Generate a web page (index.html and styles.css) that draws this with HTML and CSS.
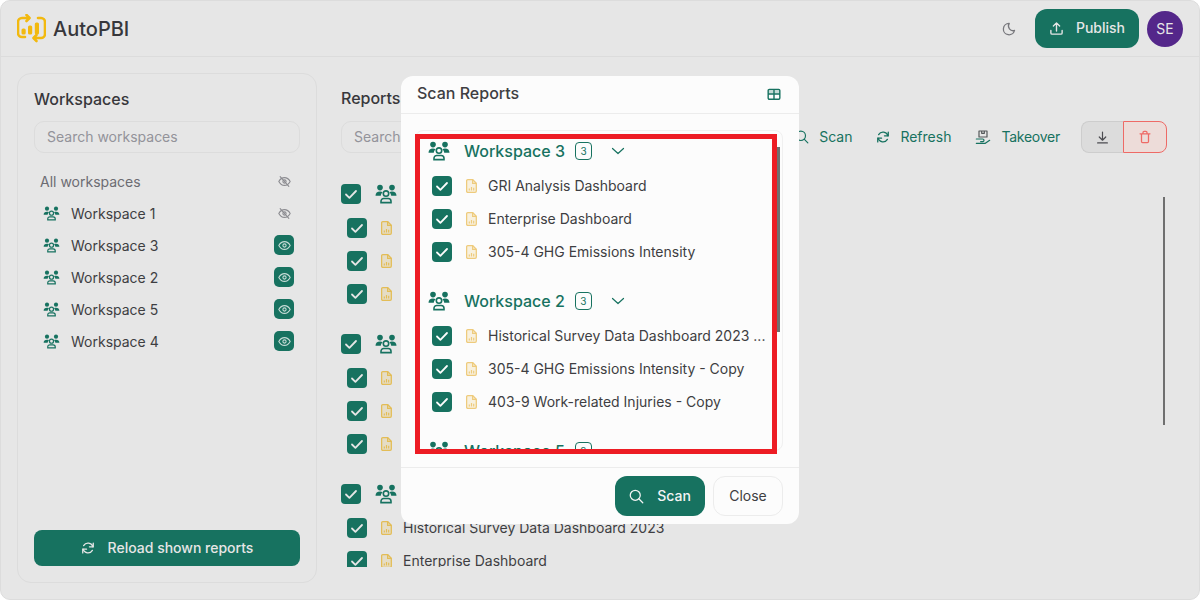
FILE: index.html
```html
<!DOCTYPE html>
<html lang="en">
<head>
    <meta charset="UTF-8">
    <meta name="viewport" content="width=device-width, initial-scale=1.0">
    <title>AutoPBI</title>
    <link rel="stylesheet" href="styles.css">
</head>
<body>
    <svg class="sprite" width="0" height="0" aria-hidden="true">
        <symbol id="i-group" viewBox="0 0 22 20">
            <circle cx="5" cy="3.600" r="2.800" fill="currentColor"/>
            <circle cx="17" cy="3.600" r="2.800" fill="currentColor"/>
            <path d="M0.500 11.800c0-2.800 1.700-4.300 4.500-4.300c1 0 1.900 .2 2.600 .7c-1 .8-1.600 2-1.800 3.600z" fill="currentColor"/>
            <path d="M21.500 11.800c0-2.800-1.700-4.300-4.500-4.300c-1 0-1.900 .2-2.600 .7c1 .8 1.600 2 1.800 3.600z" fill="currentColor"/>
            <circle cx="11" cy="9.600" r="2.700" fill="none" stroke="currentColor" stroke-width="1.600"/>
            <path d="M6 18.600v-1.300c0-1.800 1.200-2.800 2.800-2.800h4.400c1.600 0 2.800 1 2.800 2.800v1.300z" fill="none" stroke="currentColor" stroke-width="1.600"/>
        </symbol>
        <symbol id="i-file" viewBox="0 0 11 14">
            <path d="M1.800 .7h5l3.500 3.500v7.900a1.200 1.200 0 0 1-1.200 1.200h-7.300a1.200 1.200 0 0 1-1.200-1.200v-10.200a1.200 1.200 0 0 1 1.200-1.200z" fill="currentColor" fill-opacity=".22" stroke="currentColor" stroke-width="1.300"/>
            <path d="M6.600 .8v3.600h3.600" fill="none" stroke="currentColor" stroke-width="1.200"/>
            <path d="M3.300 11.500v-2M5.500 11.500v-3.500M7.700 11.500v-2.700" fill="none" stroke="currentColor" stroke-width="1.200"/>
        </symbol>
        <symbol id="i-check" viewBox="0 0 20 20">
            <path d="M5 10.500l3.400 3.300l6.600-6.800" fill="none" stroke="currentColor" stroke-width="1.800" stroke-linecap="round" stroke-linejoin="round"/>
        </symbol>
        <symbol id="i-eye" viewBox="0 0 24 24">
            <g fill="none" stroke="currentColor" stroke-width="2" stroke-linecap="round" stroke-linejoin="round">
                <circle cx="12" cy="12" r="3"/>
                <path d="M1.500 12c2.600-4.800 6-7.200 10.500-7.200s7.900 2.400 10.500 7.200c-2.600 4.800-6 7.200-10.500 7.200s-7.900-2.400-10.500-7.200"/>
            </g>
        </symbol>
        <symbol id="i-eye-off" viewBox="0 0 24 24">
            <g fill="none" stroke="currentColor" stroke-width="2" stroke-linecap="round" stroke-linejoin="round">
                <circle cx="12" cy="12" r="3"/>
                <path d="M1.500 12c2.600-4.800 6-7.200 10.500-7.200s7.900 2.400 10.500 7.200c-2.600 4.800-6 7.200-10.500 7.200s-7.900-2.400-10.500-7.200"/>
                <path d="M4 3l16 18"/>
            </g>
        </symbol>
        <symbol id="i-search" viewBox="0 0 24 24">
            <g fill="none" stroke="currentColor" stroke-width="2" stroke-linecap="round">
                <circle cx="10" cy="10" r="8"/>
                <path d="M22 22l-6.300-6.300"/>
            </g>
        </symbol>
        <symbol id="i-refresh" viewBox="0 0 24 24">
            <g fill="none" stroke="currentColor" stroke-width="2.200" stroke-linecap="round" stroke-linejoin="round">
                <path d="M20.500 10a8.800 8.800 0 0 0-16-2"/>
                <path d="M3.500 14a8.800 8.800 0 0 0 16 2"/>
                <path d="M21 3.500v6.500h-6.500"/>
                <path d="M3 20.500v-6.500h6.500"/>
            </g>
        </symbol>
    </svg>

    <div class="app">
        <header class="topbar">
            <div class="brand">
                <svg class="logo" viewBox="17 15 29 29">
                    <g fill="none" stroke="#f2b90f" stroke-width="2.600" stroke-linecap="round" stroke-linejoin="round">
                        <path d="M29 19h-7a4 4 0 0 0-4 4v11a4 4 0 0 0 4 4h3"/>
                        <path d="M34 39h7a4 4 0 0 0 4-4v-12a4 4 0 0 0-4-4h-3"/>
                        <path d="M26.500 16l3 3l-3 3"/>
                        <path d="M36.500 36l-3 3l3 3"/>
                    </g>
                    <g fill="#f2b90f">
                        <rect x="21.500" y="29.500" width="4.200" height="6" rx="1.600"/>
                        <rect x="28" y="26.500" width="4.200" height="9" rx="1.600"/>
                        <rect x="34.800" y="23.500" width="4.200" height="12" rx="1.600"/>
                    </g>
                </svg>
                <span class="brand-name">AutoPBI</span>
            </div>
            <div class="topbar-right">
                <svg class="moon" viewBox="0 0 24 24"><path d="M12 2.500h.4a8 8 0 0 0 9.100 12a9.700 9.700 0 1 1-9.500-12z" fill="none" stroke="currentColor" stroke-width="2.200" stroke-linejoin="round"/></svg>
                <button class="btn btn-publish">
                    <svg class="icon-15" viewBox="0 0 24 24"><path d="M3 15v4a2 2 0 0 0 2 2h14a2 2 0 0 0 2-2v-4M7 8l5-5l5 5M12 3v13" fill="none" stroke="currentColor" stroke-width="2.200" stroke-linecap="round" stroke-linejoin="round"/></svg>
                    <span class="btn-text">Publish</span>
                </button>
                <div class="avatar">SE</div>
            </div>
        </header>

        <main class="content">
            <aside class="sidebar">
                <h2 class="panel-title">Workspaces</h2>
                <input class="search" type="text" placeholder="Search workspaces">
                <ul class="ws-list">
                    <li class="ws-item ws-all"><span class="ws-name">All workspaces</span><span class="eye-off"><svg class="icon-13"><use href="#i-eye-off"/></svg></span></li>
                    <li class="ws-item"><svg class="ws-icon"><use href="#i-group"/></svg><span class="ws-name">Workspace 1</span><span class="eye-off"><svg class="icon-13"><use href="#i-eye-off"/></svg></span></li>
                    <li class="ws-item"><svg class="ws-icon"><use href="#i-group"/></svg><span class="ws-name">Workspace 3</span><span class="eye-on"><svg class="icon-13"><use href="#i-eye"/></svg></span></li>
                    <li class="ws-item"><svg class="ws-icon"><use href="#i-group"/></svg><span class="ws-name">Workspace 2</span><span class="eye-on"><svg class="icon-13"><use href="#i-eye"/></svg></span></li>
                    <li class="ws-item"><svg class="ws-icon"><use href="#i-group"/></svg><span class="ws-name">Workspace 5</span><span class="eye-on"><svg class="icon-13"><use href="#i-eye"/></svg></span></li>
                    <li class="ws-item"><svg class="ws-icon"><use href="#i-group"/></svg><span class="ws-name">Workspace 4</span><span class="eye-on"><svg class="icon-13"><use href="#i-eye"/></svg></span></li>
                </ul>
                <button class="btn btn-reload">
                    <svg class="icon-14"><use href="#i-refresh"/></svg>
                    <span class="btn-text">Reload shown reports</span>
                </button>
            </aside>

            <section class="reports">
                <h2 class="panel-title reports-title">Reports</h2>
                <div class="toolbar">
                    <input class="search search-reports" type="text" placeholder="Search reports">
                    <div class="tool"><svg class="icon-14"><use href="#i-search"/></svg><span class="btn-text">Scan</span></div>
                    <div class="tool"><svg class="icon-14"><use href="#i-refresh"/></svg><span class="btn-text">Refresh</span></div>
                    <div class="tool tool-last">
                        <svg class="icon-16" viewBox="0 0 24 24"><path d="M6 3h12v9h-12zM10 3v3.500h4v-3.500" fill="none" stroke="#55595a" stroke-width="1.800" stroke-linejoin="round"/><path d="M2 15h9.500a2 2 0 0 1 0 4h-3M2 21.500h13.500l6.500-4.500" fill="none" stroke="currentColor" stroke-width="1.800" stroke-linecap="round" stroke-linejoin="round"/></svg>
                        <span class="btn-text">Takeover</span>
                    </div>
                    <div class="split">
                        <span class="split-dl"><svg class="icon-13" viewBox="0 0 24 24"><path d="M3 22h18M6 11l6 6l6-6M12 2v15" fill="none" stroke="currentColor" stroke-width="2.200" stroke-linecap="round" stroke-linejoin="round"/></svg></span>
                        <span class="split-del"><svg class="icon-14" viewBox="0 0 24 24"><path d="M3.500 6.500h17M8.500 6.500v-2a2 2 0 0 1 2-2h3a2 2 0 0 1 2 2v2M6 6.500v13a2 2 0 0 0 2 2h8a2 2 0 0 0 2-2v-13" fill="none" stroke="currentColor" stroke-width="2.200" stroke-linecap="round" stroke-linejoin="round"/></svg></span>
                    </div>
                </div>

                <div class="report-list">
                    <div class="report-group">
                        <div class="group-head"><span class="box"><svg><use href="#i-check"/></svg></span><svg class="group-icon"><use href="#i-group"/></svg><span class="group-name">Workspace 3</span></div>
                        <div class="report-row"><span class="box"><svg><use href="#i-check"/></svg></span><svg class="file-icon"><use href="#i-file"/></svg><span class="row-text">GRI Analysis Dashboard</span></div>
                        <div class="report-row"><span class="box"><svg><use href="#i-check"/></svg></span><svg class="file-icon"><use href="#i-file"/></svg><span class="row-text">Enterprise Dashboard</span></div>
                        <div class="report-row"><span class="box"><svg><use href="#i-check"/></svg></span><svg class="file-icon"><use href="#i-file"/></svg><span class="row-text">305-4 GHG Emissions Intensity</span></div>
                    </div>
                    <div class="report-group">
                        <div class="group-head"><span class="box"><svg><use href="#i-check"/></svg></span><svg class="group-icon"><use href="#i-group"/></svg><span class="group-name">Workspace 2</span></div>
                        <div class="report-row"><span class="box"><svg><use href="#i-check"/></svg></span><svg class="file-icon"><use href="#i-file"/></svg><span class="row-text">Historical Survey Data Dashboard 2023</span></div>
                        <div class="report-row"><span class="box"><svg><use href="#i-check"/></svg></span><svg class="file-icon"><use href="#i-file"/></svg><span class="row-text">305-4 GHG Emissions Intensity - Copy</span></div>
                        <div class="report-row"><span class="box"><svg><use href="#i-check"/></svg></span><svg class="file-icon"><use href="#i-file"/></svg><span class="row-text">403-9 Work-related Injuries - Copy</span></div>
                    </div>
                    <div class="report-group">
                        <div class="group-head"><span class="box"><svg><use href="#i-check"/></svg></span><svg class="group-icon"><use href="#i-group"/></svg><span class="group-name">Workspace 5</span></div>
                        <div class="report-row"><span class="box"><svg><use href="#i-check"/></svg></span><svg class="file-icon"><use href="#i-file"/></svg><span class="row-text">Historical Survey Data Dashboard 2023</span></div>
                        <div class="report-row"><span class="box"><svg><use href="#i-check"/></svg></span><svg class="file-icon"><use href="#i-file"/></svg><span class="row-text">Enterprise Dashboard</span></div>
                    </div>
                    <div class="list-thumb"></div>
                </div>
            </section>
        </main>
    </div>

    <!-- Scan dialog -->
    <div class="overlay">
        <div class="modal">
            <div class="modal-head">
                <h3 class="modal-title">Scan Reports</h3>
                <svg class="icon-14 modal-table" viewBox="0 0 24 24"><path d="M2 6a2 2 0 0 1 2-2h16a2 2 0 0 1 2 2v5h-20z" fill="currentColor" opacity=".25"/><path d="M2 6a2 2 0 0 1 2-2h16a2 2 0 0 1 2 2v13a2 2 0 0 1-2 2h-16a2 2 0 0 1-2-2zM2 12h20M12 4v17" fill="none" stroke="currentColor" stroke-width="2.400"/></svg>
            </div>
            <div class="modal-body">
                <div class="scan-card">
                    <div class="scan-group">
                        <div class="scan-head"><svg class="group-icon"><use href="#i-group"/></svg><span class="scan-name">Workspace 3</span><span class="count">3</span><svg class="chevron" viewBox="0 0 14 8"><path d="M1.500 1.500l5.500 5l5.500-5" fill="none" stroke="currentColor" stroke-width="1.200" stroke-linecap="round" stroke-linejoin="round"/></svg></div>
                        <div class="scan-row"><span class="box"><svg><use href="#i-check"/></svg></span><svg class="file-icon"><use href="#i-file"/></svg><span class="row-text">GRI Analysis Dashboard</span></div>
                        <div class="scan-row"><span class="box"><svg><use href="#i-check"/></svg></span><svg class="file-icon"><use href="#i-file"/></svg><span class="row-text">Enterprise Dashboard</span></div>
                        <div class="scan-row"><span class="box"><svg><use href="#i-check"/></svg></span><svg class="file-icon"><use href="#i-file"/></svg><span class="row-text">305-4 GHG Emissions Intensity</span></div>
                    </div>
                    <div class="scan-group">
                        <div class="scan-head"><svg class="group-icon"><use href="#i-group"/></svg><span class="scan-name">Workspace 2</span><span class="count">3</span><svg class="chevron" viewBox="0 0 14 8"><path d="M1.500 1.500l5.500 5l5.500-5" fill="none" stroke="currentColor" stroke-width="1.200" stroke-linecap="round" stroke-linejoin="round"/></svg></div>
                        <div class="scan-row"><span class="box"><svg><use href="#i-check"/></svg></span><svg class="file-icon"><use href="#i-file"/></svg><span class="row-text">Historical Survey Data Dashboard 2023 ...</span></div>
                        <div class="scan-row"><span class="box"><svg><use href="#i-check"/></svg></span><svg class="file-icon"><use href="#i-file"/></svg><span class="row-text">305-4 GHG Emissions Intensity - Copy</span></div>
                        <div class="scan-row"><span class="box"><svg><use href="#i-check"/></svg></span><svg class="file-icon"><use href="#i-file"/></svg><span class="row-text">403-9 Work-related Injuries - Copy</span></div>
                    </div>
                    <div class="scan-group">
                        <div class="scan-head"><svg class="group-icon"><use href="#i-group"/></svg><span class="scan-name">Workspace 5</span><span class="count">2</span></div>
                    </div>
                    <div class="scan-thumb"></div>
                </div>
            </div>
            <div class="modal-foot">
                <button class="btn btn-scan"><svg class="icon-15"><use href="#i-search"/></svg><span class="btn-text">Scan</span></button>
                <button class="btn btn-close"><span class="btn-text">Close</span></button>
            </div>
        </div>
        <div class="highlight"></div>
    </div>
</body>
</html>
```

FILE: styles.css
```css
* {
    box-sizing: border-box;
}
html, body {
    height: 100%;
}
body {
    margin: 0;
    background: #ffffff;
    font-family: Inter, "Liberation Sans", sans-serif;
    font-size: 14px;
    color: #3e3e42;
    overflow: hidden;
}
.sprite {
    position: absolute;
}
h2, h3, ul {
    margin: 0;
    padding: 0;
}
ul {
    list-style: none;
}
svg {
    display: block;
    flex: none;
}
.icon-13 {
    width: 13px;
    height: 13px;
}
.icon-14 {
    width: 14px;
    height: 14px;
}
.icon-15 {
    width: 15px;
    height: 15px;
}
.icon-16 {
    width: 16px;
    height: 16px;
}
/* Inter sits about 1px low here, lift the labels a bit */
.btn-text, .row-text {
    padding-bottom: 2px;
    white-space: nowrap;
}

/* page behind the dialog, colours are the dimmed ones */
.app {
    height: 600px;
    display: flex;
    flex-direction: column;
    background: #e6e6e6;
    border: 1px solid #dcdcdc;
    border-radius: 10px;
}
.topbar {
    height: 56px;
    flex: none;
    display: flex;
    align-items: center;
    justify-content: space-between;
    padding: 0 16px;
    border-bottom: 1px solid #dcdcdc;
}
.brand {
    display: flex;
    align-items: center;
    gap: 7px;
}
.logo {
    width: 29px;
    height: 29px;
}
.brand-name {
    font-size: 20px;
    font-weight: 500;
    color: #37373b;
}
.topbar-right {
    display: flex;
    align-items: center;
}
.moon {
    width: 14px;
    height: 14px;
    color: #77777c;
    margin-right: 19px;
}
.btn {
    display: flex;
    align-items: center;
    justify-content: center;
    border: 0;
    font-family: inherit;
    font-size: 14px;
    font-weight: 500;
}
.btn-publish {
    width: 104px;
    height: 39px;
    gap: 12px;
    margin-right: 8px;
    border-radius: 12px;
    background: #177260;
    color: #e6e6e6;
}
.avatar {
    width: 36px;
    height: 36px;
    border-radius: 50%;
    background: #54278a;
    color: #e6e6e6;
    display: flex;
    align-items: center;
    justify-content: center;
}

.content {
    flex: 1;
    display: flex;
    gap: 24px;
    padding: 16px;
    min-height: 0;
}
.sidebar {
    width: 300px;
    flex: none;
    display: flex;
    flex-direction: column;
    padding: 15px 16px 16px;
    border: 1px solid #dcdcdc;
    border-radius: 14px;
}
.panel-title {
    font-size: 16px;
    font-weight: 500;
    line-height: 20px;
    color: #37373b;
}
.search {
    height: 32px;
    margin-top: 12px;
    padding: 0 12px 2px;
    border: 1px solid #dcdcdc;
    border-radius: 10px;
    background: transparent;
    font-family: inherit;
    font-size: 14px;
    color: #3e3e42;
    outline: none;
}
.search::placeholder {
    color: #93939a;
}
.ws-list {
    margin-top: 12px;
}
.ws-item {
    height: 32px;
    display: flex;
    align-items: center;
    padding: 0 6px;
}
.ws-all .ws-name {
    color: #6c6c72;
}
.ws-icon {
    width: 17px;
    height: 15px;
    margin: 0 11px 0 3px;
    color: #177260;
}
.ws-name {
    flex: 1;
}
.eye-off, .eye-on {
    width: 20px;
    height: 20px;
    display: flex;
    align-items: center;
    justify-content: center;
    border-radius: 5px;
}
.eye-off {
    color: #8b8b90;
}
.eye-on {
    background: #177260;
    color: #c6dbd6;
}
.btn-reload {
    height: 36px;
    margin-top: auto;
    gap: 13px;
    border-radius: 8px;
    background: #177260;
    color: #e6e6e6;
}

.reports {
    flex: 1;
    min-width: 0;
    display: flex;
    flex-direction: column;
    height: 494px;
    padding-right: 16px;
}
.reports-title {
    margin-top: 15px;
}
.toolbar {
    display: flex;
    align-items: center;
    margin: 13px 0 31px;
    height: 32px;
}
.search-reports {
    flex: 1;
    min-width: 0;
    margin: 0 24px 0 0;
}
.tool {
    display: flex;
    align-items: center;
    gap: 10px;
    margin-right: 24px;
    color: #177260;
    white-space: nowrap;
}
.tool-last {
    margin-right: 21px;
    letter-spacing: -0.25px;
}
.split {
    display: flex;
    height: 32px;
}
.split-dl, .split-del {
    display: flex;
    align-items: center;
    justify-content: center;
}
.split-dl {
    width: 42px;
    background: #dcdcdc;
    border: 1px solid #cdcdcd;
    border-right: 0;
    border-radius: 8px 0 0 8px;
    color: #4b4b50;
}
.split-del {
    width: 44px;
    background: #eddcd9;
    border: 1px solid #ee6a66;
    border-radius: 0 8px 8px 0;
    color: #ee6a66;
}
.report-list {
    position: relative;
    flex: 1;
    min-height: 0;
    overflow: hidden;
}
.report-group {
    margin-bottom: 30px;
}
.group-head, .report-row {
    display: flex;
    align-items: center;
    height: 20px;
}
.report-row {
    margin-top: 13px;
    padding-left: 6px;
}
.group-head + .report-row {
    margin-top: 14px;
}
.box {
    width: 20px;
    height: 20px;
    flex: none;
    border-radius: 4px;
    background: #177260;
    color: #e6e6e6;
}
.box svg {
    width: 20px;
    height: 20px;
}
.group-icon {
    width: 22px;
    height: 20px;
    color: #177260;
    margin-left: 14px;
}
.group-name {
    margin-left: 14px;
    color: #177260;
    font-size: 16px;
    font-weight: 500;
}
.file-icon {
    width: 11px;
    height: 14px;
    margin: 0 11px 0 14px;
    color: #e3bd57;
}
.list-thumb {
    position: absolute;
    top: 13px;
    right: 2px;
    width: 2px;
    height: 228px;
    background: #6f6f6f;
}

/* dialog */
.overlay {
    position: fixed;
    top: 0;
    left: 0;
    width: 100%;
    height: 100%;
    display: flex;
    align-items: center;
    justify-content: center;
}
.modal {
    width: 398px;
    height: 448px;
    display: flex;
    flex-direction: column;
    background: #fcfcfc;
    border-radius: 12px;
}
.modal-head {
    height: 38px;
    flex: none;
    display: flex;
    align-items: center;
    justify-content: space-between;
    padding: 0 18px 2px 16px;
    border-bottom: 1px solid #ececec;
}
.modal-title {
    font-size: 16px;
    font-weight: 500;
    color: #3e3e42;
    padding-bottom: 2px;
}
.modal-table {
    color: #177260;
}
.modal-body {
    flex: 1;
    min-height: 0;
    padding: 16px 16px 16px 14px;
}
.scan-card {
    position: relative;
    height: 321px;
    padding: 10px 0 0 12px;
    overflow: hidden;
    border: 1px solid #f0f0f0;
    border-radius: 8px;
}
.scan-group {
    margin-bottom: 29px;
}
.scan-head {
    display: flex;
    align-items: center;
    height: 20px;
}
.scan-head .group-icon {
    margin-left: 0;
}
.scan-name {
    margin-left: 14px;
    color: #177260;
    font-size: 16px;
    font-weight: 500;
    white-space: nowrap;
}
.count {
    width: 17px;
    height: 18px;
    margin-left: 10px;
    border: 1px solid #177260;
    border-radius: 4px;
    color: #177260;
    font-size: 10px;
    display: flex;
    align-items: center;
    justify-content: center;
}
.chevron {
    width: 14px;
    height: 8px;
    margin-left: 19px;
    color: #177260;
}
.scan-row {
    display: flex;
    align-items: center;
    height: 20px;
    margin-top: 13px;
    padding-left: 4px;
}
.scan-head + .scan-row {
    margin-top: 15px;
}
.scan-row .box {
    color: #fcfcfc;
}
.scan-row .file-icon {
    color: #eecb7c;
}
.scan-thumb {
    position: absolute;
    top: 16px;
    right: 2px;
    width: 3px;
    height: 185px;
    background: #6f6f6f;
}
.modal-foot {
    flex: none;
    display: flex;
    justify-content: flex-end;
    gap: 8px;
    padding: 8px 16px;
    border-top: 1px solid #ececec;
}
.btn-scan {
    width: 90px;
    height: 40px;
    gap: 13px;
    border-radius: 12px;
    background: #177260;
    color: #f4f4f4;
}
.btn-close {
    width: 70px;
    height: 40px;
    border: 1px solid #ececec;
    border-radius: 12px;
    background: #fcfcfc;
    color: #3e3e42;
    font-weight: 400;
}

/* red annotation box over the dialog */
.highlight {
    position: absolute;
    left: 415px;
    top: 134px;
    width: 362px;
    height: 320px;
    border: 5px solid #ed1c24;
}
```
